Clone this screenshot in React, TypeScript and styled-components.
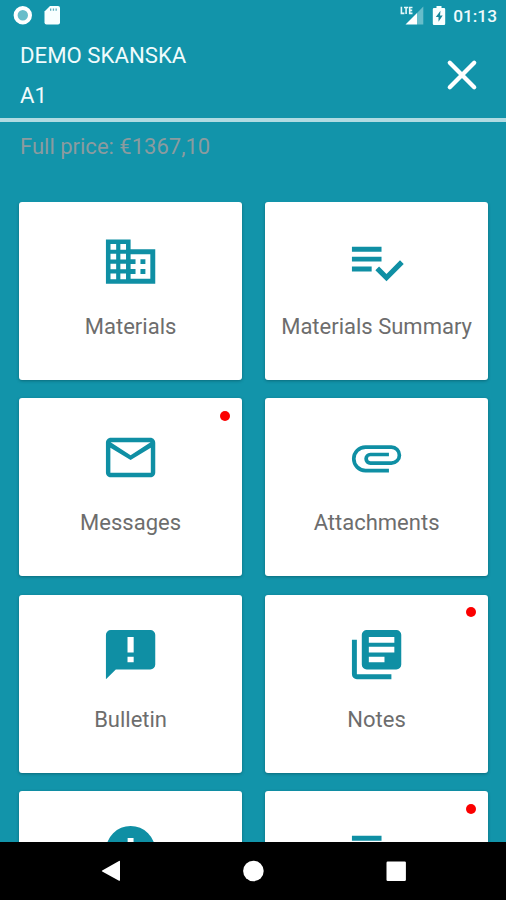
import React from "react";
import styled, { createGlobalStyle } from "styled-components";

const TEAL = "#1294aa";
const ICON_TEAL = "#0f8fa4";

const GlobalStyle = createGlobalStyle`
  * { box-sizing: border-box; }
  html, body { margin: 0; padding: 0; background: ${TEAL}; }
  body { font-family: Roboto, "Liberation Sans", sans-serif; overflow: hidden; }
`;

const Screen = styled.div`
  width: 506px;
  height: 900px;
  display: flex;
  flex-direction: column;
  background: ${TEAL};
  overflow: hidden;
`;

const StatusBar = styled.div`
  height: 32px;
  flex: none;
  display: flex;
  align-items: center;
  justify-content: space-between;
  padding: 0 9px 0 12px;
`;

const StatusGroup = styled.div`
  display: flex;
  align-items: center;
  svg { display: block; }
`;

const Clock = styled.span`
  margin-left: 7.5px;
  color: #eefafc;
  font-size: 17.3px;
  font-weight: 500;
  line-height: 32px;
`;

const Header = styled.header`
  height: 90px;
  flex: none;
  display: flex;
  justify-content: space-between;
  padding: 4px 25px 0 20px;
  border-bottom: 4px solid #b0dbe2;
`;

const HeaderText = styled.div`
  color: #f0fbfc;
  font-size: 22.2px;
  line-height: 39.5px;
`;

const CloseButton = styled.button`
  width: 38px;
  height: 38px;
  margin-top: 20px;
  padding: 0;
  border: 0;
  background: none;
  svg { display: block; }
`;

const Price = styled.div`
  height: 79.5px;
  flex: none;
  padding: 5px 20px 0;
  color: #8b9b9f;
  font-size: 22px;
  line-height: 40px;
`;

const Grid = styled.main`
  flex: 1;
  min-height: 0;
  overflow: hidden;
  display: grid;
  grid-template-columns: 222.8px 222.8px;
  grid-auto-rows: 178px;
  column-gap: 23.2px;
  row-gap: 18.5px;
  padding-left: 19.2px;
`;

const Card = styled.div`
  position: relative;
  display: flex;
  flex-direction: column;
  align-items: center;
  padding-top: 30.2px;
  background: #fff;
  border-radius: 3px;
  box-shadow: 0 1px 3px rgba(0, 50, 60, 0.42);
`;

const CardIcon = styled.svg`
  display: block;
  width: 59.2px;
  height: 59.2px;
  flex: none;
  fill: ${ICON_TEAL};
`;

const CardLabel = styled.div`
  margin-top: 16px;
  color: #6d6d6d;
  font-size: 22px;
  line-height: 40px;
  white-space: nowrap;
`;

const Dot = styled.span`
  position: absolute;
  top: 12.6px;
  right: 12.4px;
  width: 10px;
  height: 10px;
  border-radius: 50%;
  background: #fb0000;
`;

const NavBar = styled.nav`
  height: 58px;
  flex: none;
  display: flex;
  align-items: center;
  justify-content: center;
  gap: 121px;
  background: #000;
  svg { display: block; width: 22px; height: 22px; fill: #fff; }
`;

const icons = {
  building:
    "M12 7V3H2v18h20V7zM6.15 19.15h-2.3v-2.3h2.3zM6.15 15.15h-2.3v-2.3h2.3zM6.15 11.15h-2.3v-2.3h2.3zM6.15 7.15h-2.3v-2.3h2.3zM10.15 19.15h-2.3v-2.3h2.3zM10.15 15.15h-2.3v-2.3h2.3zM10.15 11.15h-2.3v-2.3h2.3zM10.15 7.15h-2.3v-2.3h2.3zM20 19h-8v-2h2v-2h-2v-2h2v-2h-2V9h8zM18 11h-2v2h2zM18 15h-2v2h2z",
  checklist:
    "M14 10H2v2h12zM14 6H2v2h12zM2 16h8v-2H2zM21.5 11.5 23 13l-6.99 7-4.51-4.5L13 14l3.01 3z",
  mail:
    "M20 4H4c-1.1 0-2 .9-2 2v12c0 1.1.9 2 2 2h16c1.1 0 2-.9 2-2V6c0-1.1-.9-2-2-2zm.2 14.1H3.8V8L12 13l8.2-5zM12 11 3.9 5.8h16.2z",
  attachment:
    "M7.5 18A5.5 5.5 0 0 1 2 12.5 5.5 5.5 0 0 1 7.5 7H18a4 4 0 0 1 0 8H9.5a2.5 2.5 0 0 1 0-5H17v1.5H9.5a1 1 0 0 0 0 2H18a2.5 2.5 0 0 0 0-5H7.5a4 4 0 0 0 0 8H17V18z",
  bulletin:
    "M20 2H4a2 2 0 0 0-2 2v18l4-4h14a2 2 0 0 0 2-2V4a2 2 0 0 0-2-2zM13.25 11.2h-2.5V4.85h2.5zM13.25 15.15h-2.5v-2.3h2.5z",
  notes:
    "M20 2H8a2 2 0 0 0-2 2v12a2 2 0 0 0 2 2h12a2 2 0 0 0 2-2V4a2 2 0 0 0-2-2zM19.2 7.15H8.85v-2.3H19.2zM19.2 11.15H8.85v-2.3H19.2zM15.2 15.15H8.85v-2.3h6.35zM4 6H2v14a2 2 0 0 0 2 2h14v-2H4z",
  alert:
    "M12 2a10 10 0 1 0 0 20 10 10 0 0 0 0-20zM13.2 13.2h-2.4V6.85h2.4zM13.2 17.2h-2.4v-2.4h2.4z",
};

interface Tile {
  icon: keyof typeof icons;
  label: string;
  unread?: boolean;
}

const tiles: Tile[] = [
  { icon: "building", label: "Materials" },
  { icon: "checklist", label: "Materials Summary" },
  { icon: "mail", label: "Messages", unread: true },
  { icon: "attachment", label: "Attachments" },
  { icon: "bulletin", label: "Bulletin" },
  { icon: "notes", label: "Notes", unread: true },
  { icon: "alert", label: "" },
  { icon: "checklist", label: "", unread: true },
];

export default function App() {
  return (
    <>
      <GlobalStyle />
      <Screen>
        <StatusBar>
          <StatusGroup>
            <svg width="52" height="22" viewBox="0 0 52 22">
              <circle cx="10.8" cy="10.2" r="7.2" fill="#68bdca" stroke="#fff" strokeWidth="4" />
              <path
                d="M38 1H46q2 0 2 2v14.500q0 2-2 2H34.500q-2 0-2-2V6.500z"
                fill="#f8ffff"
              />
              <path d="M38 3.500h1.300v2.200H38zM40.800 3.500h1.300v2.200h-1.300zM43.500 3.500h1.300v2.200h-1.300z" fill="#5dadbc" />
            </svg>
          </StatusGroup>
          <StatusGroup>
            <svg width="46" height="22" viewBox="0 0 46 22">
              <path
                d="M1.400 1.800v6.600h3M4 2.500h4.200M6.100 2.500v6.600M12.500 2.500H9.700v5.900h2.800M9.700 5.400h2.500"
                fill="none"
                stroke="#e6f8fa"
                strokeWidth="1.600"
              />
              <path d="M23.300 1.500v18H17V8z" fill="#67bdca" />
              <path d="M17 8v11.500H5.500z" fill="#fff" />
              <path
                d="M36.500 1h5v2H44q1.200 0 1.200 1.200v14.600q0 1.200-1.200 1.200H34q-1.200 0-1.200-1.200V4.200Q32.800 3 34 3h2.500z"
                fill="#f8ffff"
              />
              <path d="M40.500 5.800 35.800 12h2.700v4.700l4.200-6.300H40z" fill="#16889c" />
            </svg>
            <Clock>01:13</Clock>
          </StatusGroup>
        </StatusBar>
        <Header>
          <HeaderText>
            <div>DEMO SKANSKA</div>
            <div>A1</div>
          </HeaderText>
          <CloseButton aria-label="Close">
            <svg width="38" height="38" viewBox="0 0 38 38">
              <path
                d="M6.800 6.800 31.200 31.200M31.200 6.800 6.800 31.200"
                stroke="#fff"
                strokeWidth="4.300"
                strokeLinecap="round"
              />
            </svg>
          </CloseButton>
        </Header>
        <Price>Full price: €1367,10</Price>
        <Grid>
          {tiles.map((tile, index) => (
            <Card key={index}>
              {tile.unread && <Dot />}
              <CardIcon viewBox="0 0 24 24">
                <path fillRule="evenodd" d={icons[tile.icon]} />
              </CardIcon>
              {tile.label && <CardLabel>{tile.label}</CardLabel>}
            </Card>
          ))}
        </Grid>
        <NavBar>
          <svg viewBox="0 0 22 22">
            <path d="M21 1.500v18.500q0 1.200-1 .7L3.200 11.600q-.9-.6 0-1.100L20 .9q1-.5 1 .6z" />
          </svg>
          <svg viewBox="0 0 22 22">
            <circle cx="11.400" cy="11" r="10.300" />
          </svg>
          <svg viewBox="0 0 22 22">
            <rect x="1.500" y="1.600" width="19.400" height="19.400" rx="1.200" />
          </svg>
        </NavBar>
      </Screen>
    </>
  );
}
